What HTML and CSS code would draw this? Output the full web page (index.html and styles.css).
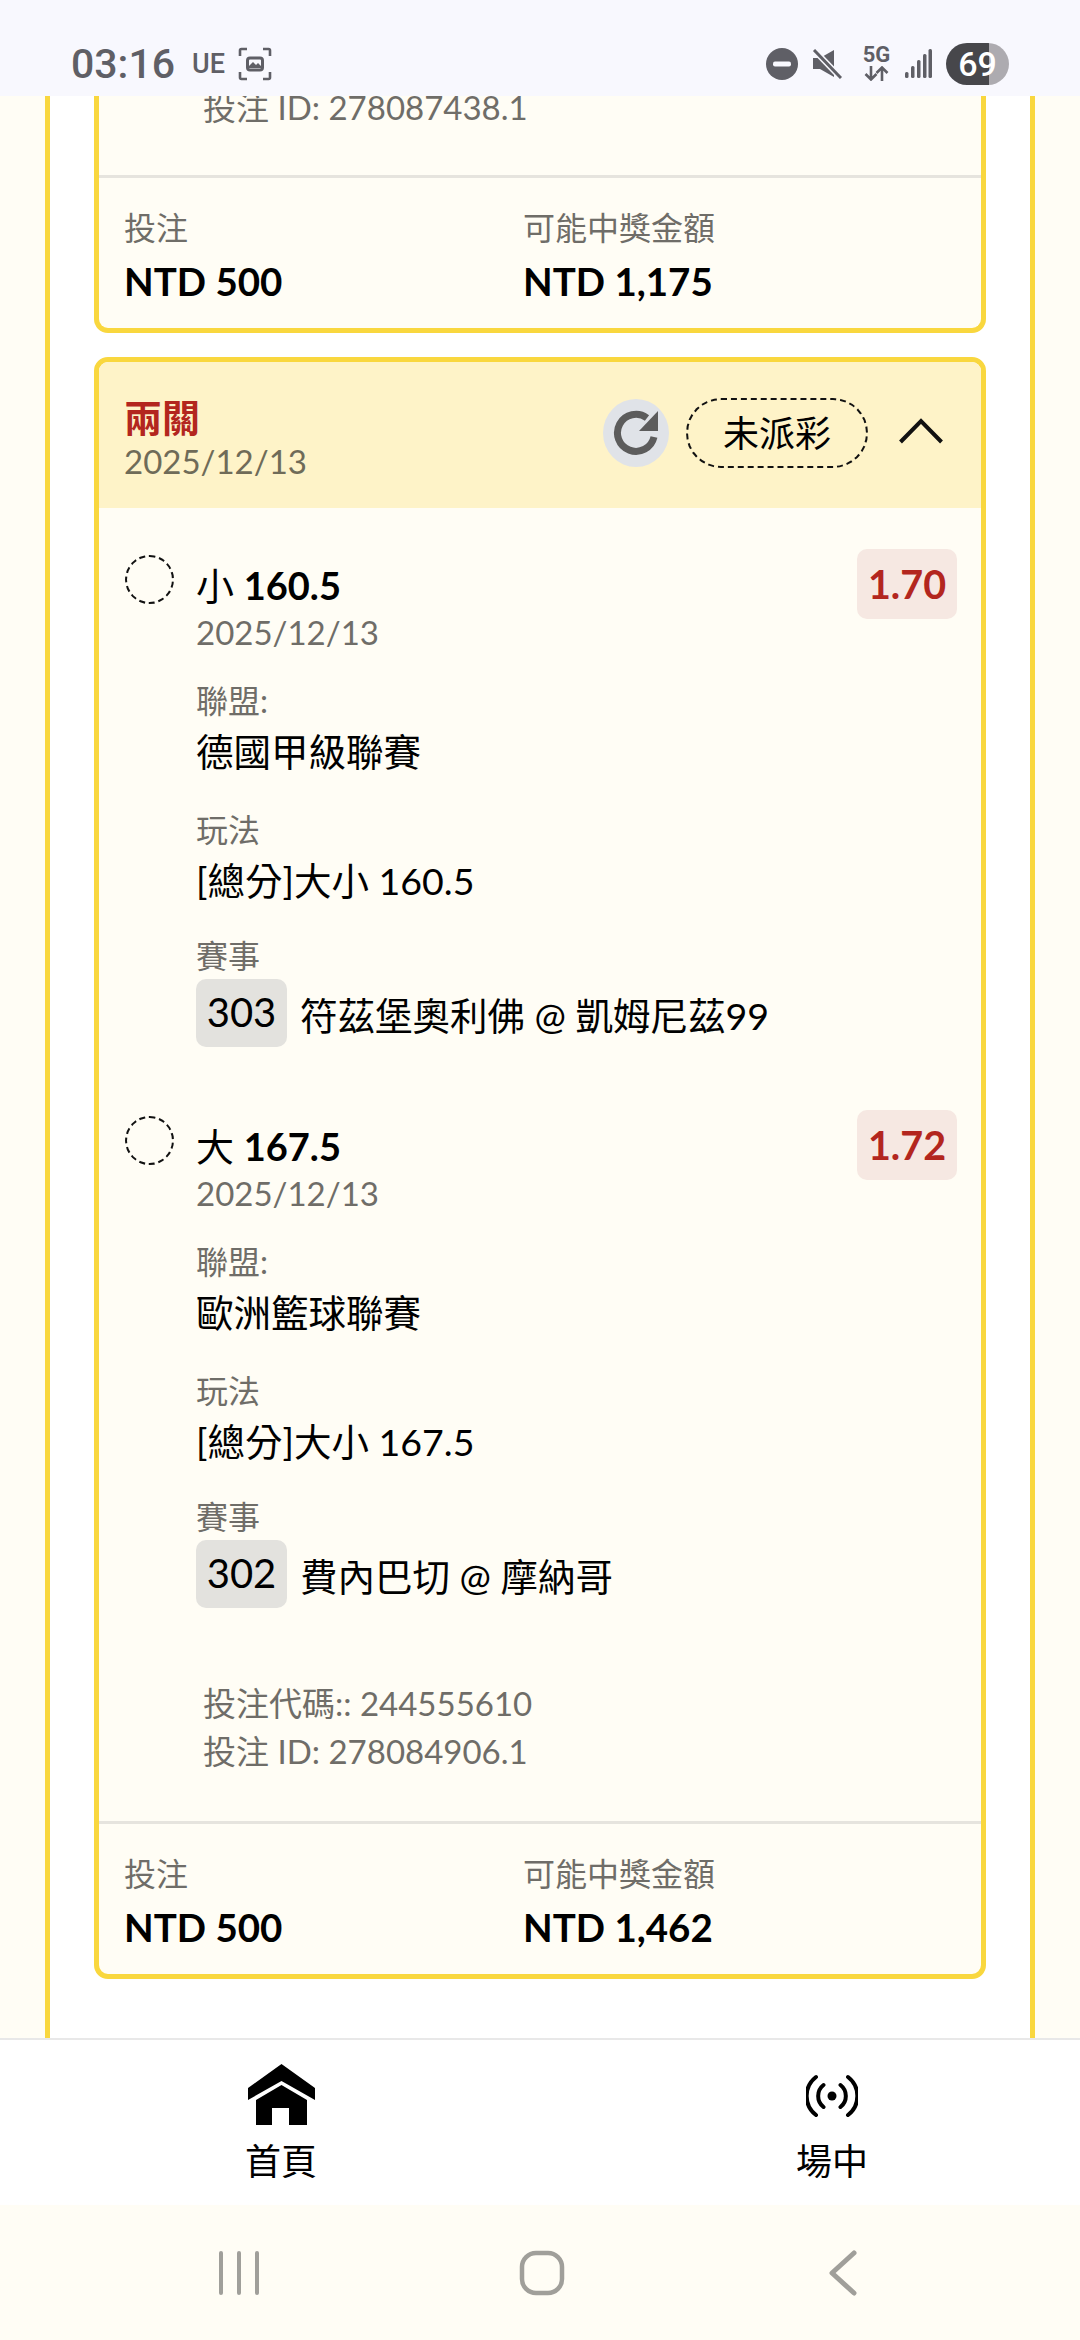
FILE: index.html
```html
<!DOCTYPE html>
<html lang="zh-Hant">
<head>
    <meta charset="UTF-8">
    <title>投注記錄</title>
    <link rel="stylesheet" href="styles.css">
</head>
<body>
    <header class="status-bar">
        <div class="status-left">
            <span class="clock">03:16</span>
            <span class="carrier">UE</span>
            <svg class="status-icon" width="34" height="34" viewBox="0 0 34 34" fill="none" stroke="#5f5f66" stroke-width="2.6">
                <path d="M9 2H3.5Q2 2 2 3.5V9M25 2h5.5Q32 2 32 3.500V9M2 25v5.500Q2 32 3.500 32H9M32 25v5.500Q32 32 30.500 32H25"/>
                <rect x="9.500" y="11" width="15" height="12" rx="2.500" stroke-width="3"/>
                <path d="M11 19l4-4 3 3 2-2 3 3v2H11z" fill="#5f5f66" stroke="none"/>
            </svg>
        </div>
        <div class="status-right">
            <svg width="32" height="32" viewBox="0 0 32 32"><circle cx="16" cy="16" r="16" fill="#5f5f66"/><rect x="7" y="13.500" width="18" height="5" rx="2" fill="#f8f8fe"/></svg>
            <svg width="30" height="30" viewBox="0 0 30 30"><path d="M1 9h7l14-8v27L8 20H1z" fill="#5f5f66"/><path d="M2 1l27 28" stroke="#f8f8fe" stroke-width="6"/><path d="M2 1l27 28" stroke="#5f5f66" stroke-width="3"/></svg>
            <span class="net"><b>5G</b>
                <svg width="25" height="15" viewBox="0 0 25 15" fill="none" stroke="#5f5f66" stroke-width="2.600"><path d="M7 0v13M1.500 8l5.500 5.500L12.500 8M18 15V2M12.500 7L18 1.500 23.500 7"/></svg>
            </span>
            <svg width="27" height="30" viewBox="0 0 27 30" fill="#5f5f66"><rect x="0" y="23" width="3.500" height="6" rx="1.500"/><rect x="6" y="17" width="3.500" height="12" rx="1.500"/><rect x="12" y="11" width="3.500" height="18" rx="1.500"/><rect x="18" y="5" width="3.500" height="24" rx="1.500"/><rect x="23.500" y="0" width="3.500" height="29" rx="1.500"/></svg>
            <span class="battery">69</span>
        </div>
    </header>

    <main class="page">
        <div class="panel">
            <section class="card card-cut">
                <div class="codes">
                    <p>投注 ID: 278087438.1</p>
                </div>
                <div class="card-foot">
                    <div class="foot-col"><span>投注</span><strong>NTD 500</strong></div>
                    <div class="foot-col"><span>可能中獎金額</span><strong>NTD 1,175</strong></div>
                </div>
            </section>

            <section class="card">
                <div class="card-head">
                    <div class="head-title">
                        <h2>兩關</h2>
                        <p>2025/12/13</p>
                    </div>
                    <span class="refresh">
                        <svg width="46" height="46" viewBox="0 0 46 46">
                            <path d="M34 8A18.500 18.500 0 1 0 41 27" fill="none" stroke="#5c5c5c" stroke-width="7"/>
                            <path d="M45 1v20H26z" fill="#5c5c5c"/>
                        </svg>
                    </span>
                    <span class="state">未派彩</span>
                    <svg class="chevron" width="44" height="26" viewBox="0 0 44 26" fill="none" stroke="#111" stroke-width="4"><path d="M1.500 24L22 3l20.500 21"/></svg>
                </div>

                <div class="card-body">
                    <article class="leg">
                        <span class="leg-mark"></span>
                        <div class="leg-main">
                            <div class="leg-title">小 <b>160.5</b></div>
                            <div class="leg-date">2025/12/13</div>
                            <div class="field field-first">
                                <div class="field-label">聯盟:</div>
                                <div class="field-value">德國甲級聯賽</div>
                            </div>
                            <div class="field">
                                <div class="field-label">玩法</div>
                                <div class="field-value">[總分]大小 160.5</div>
                            </div>
                            <div class="field field-game">
                                <div class="field-label">賽事</div>
                                <div class="game"><span class="game-no">303</span>符茲堡奧利佛 @ 凱姆尼茲99</div>
                            </div>
                        </div>
                        <span class="odds">1.70</span>
                    </article>

                    <article class="leg">
                        <span class="leg-mark"></span>
                        <div class="leg-main">
                            <div class="leg-title">大 <b>167.5</b></div>
                            <div class="leg-date">2025/12/13</div>
                            <div class="field field-first">
                                <div class="field-label">聯盟:</div>
                                <div class="field-value">歐洲籃球聯賽</div>
                            </div>
                            <div class="field">
                                <div class="field-label">玩法</div>
                                <div class="field-value">[總分]大小 167.5</div>
                            </div>
                            <div class="field field-game">
                                <div class="field-label">賽事</div>
                                <div class="game"><span class="game-no">302</span>費內巴切 @ 摩納哥</div>
                            </div>
                        </div>
                        <span class="odds">1.72</span>
                    </article>

                    <div class="codes">
                        <p>投注代碼:: 244555610</p>
                        <p>投注 ID: 278084906.1</p>
                    </div>
                </div>

                <div class="card-foot">
                    <div class="foot-col"><span>投注</span><strong>NTD 500</strong></div>
                    <div class="foot-col"><span>可能中獎金額</span><strong>NTD 1,462</strong></div>
                </div>
            </section>
        </div>
    </main>

    <nav class="tabs">
        <div class="tab">
            <svg width="67" height="61" viewBox="0 0 67 61">
                <path d="M33.500 0L67 24v12L33.500 17 0 36V24z" fill="#000"/>
                <path d="M33.500 21L59 36v25H41V44H24v17H8V36z" fill="#000"/>
            </svg>
            <span>首頁</span>
        </div>
        <div class="tab">
            <svg width="52" height="61" viewBox="0 -11 52 61" fill="none" stroke="#000" stroke-width="4" stroke-linecap="round">
                <circle cx="26" cy="21" r="4.500" fill="#000" stroke="none"/>
                <path d="M17.500 10a14 14 0 0 0 0 22M34.500 10a14 14 0 0 1 0 22M10 2a24 24 0 0 0 0 38M42 2a24 24 0 0 1 0 38"/>
            </svg>
            <span>場中</span>
        </div>
    </nav>

    <footer class="system-nav">
        <svg width="42" height="44" viewBox="0 0 42 44" stroke="#a09f9a" stroke-width="4" stroke-linecap="round"><path d="M3 2v40M21 2v40M39 2v40"/></svg>
        <svg width="46" height="46" viewBox="0 0 46 46" fill="none" stroke="#a09f9a" stroke-width="4.500"><rect x="3" y="3" width="40" height="40" rx="14"/></svg>
        <svg class="nav-back" width="28" height="46" viewBox="0 0 28 46" fill="none" stroke="#a09f9a" stroke-width="5" stroke-linecap="round" stroke-linejoin="round"><path d="M25 3L3 23l22 20"/></svg>
    </footer>
</body>
</html>
```

FILE: styles.css
```css
* {
    box-sizing: border-box;
}

html, body {
    margin: 0;
    padding: 0;
}

body {
    display: flex;
    flex-direction: column;
    width: 1080px;
    height: 2340px;
    overflow: hidden;
    background-color: #fffdf5;
    color: #000;
    font-family: "Lato", "Noto Sans CJK TC", sans-serif;
}

p, h2 {
    margin: 0;
}

/* status bar */
.status-bar {
    display: flex;
    justify-content: space-between;
    align-items: center;
    flex: none;
    height: 96px;
    padding: 31px 71px 0;
    background-color: #f8f8fe;
    color: #5f5f66;
    font-family: "Roboto", sans-serif;
}

.status-left {
    display: flex;
    align-items: center;
}

.clock {
    font-size: 41px;
    font-weight: 500;
}

.carrier {
    margin-left: 17px;
    font-size: 27px;
    font-weight: 500;
}

.status-icon {
    margin-left: 13px;
}

.status-right {
    display: flex;
    align-items: center;
    gap: 14px;
}

.net {
    display: flex;
    flex-direction: column;
    align-items: center;
    gap: 2px;
    width: 25px;
    margin-left: 8px;
    margin-right: 2px;
    font-size: 22px;
    line-height: 18px;
}

.battery {
    width: 63px;
    height: 42px;
    border-radius: 21px;
    background: linear-gradient(90deg, #47474b 68%, #adabb0 68%);
    color: #fff;
    font-size: 34px;
    font-weight: 500;
    line-height: 42px;
    text-align: center;
}

/* scrolled content */
.page {
    display: flex;
    flex: none;
    flex-direction: column;
    justify-content: flex-end;
    height: 1942px;
    padding: 0 45px;
    overflow: hidden;
}

.panel {
    padding: 0 44px 59px;
    background-color: #fff;
    border-left: 5px solid #f9d73e;
    border-right: 5px solid #f9d73e;
}

.card {
    margin-top: 24px;
    overflow: hidden;
    background-color: #fffdf5;
    border: 5px solid #f9d73e;
    border-radius: 14px;
}

.card-cut {
    margin-top: 0;
    border-top: none;
    border-radius: 0 0 14px 14px;
}

.card-head {
    display: flex;
    align-items: center;
    height: 146px;
    padding: 0 38px 5px 25px;
    background-color: #fef3c8;
}

.head-title {
    flex: 1;
    padding-top: 11px;
}

.head-title h2 {
    color: #b3261e;
    font-size: 38px;
    font-weight: 700;
    line-height: 46px;
}

.head-title p {
    color: #6f6b58;
    font-size: 33px;
    line-height: 42px;
}

.refresh {
    display: flex;
    justify-content: center;
    align-items: center;
    width: 66px;
    height: 68px;
    margin-right: 17px;
    border-radius: 50%;
    background-color: #e0e3e8;
}

.state {
    width: 182px;
    height: 70px;
    margin-right: 31px;
    border: 2px dashed #111;
    border-radius: 35px;
    font-size: 36px;
    line-height: 66px;
    text-align: center;
}

.chevron {
    margin-bottom: 3px;
}

.card-body {
    padding: 41px 24px 0 26px;
}

.leg {
    display: flex;
    align-items: flex-start;
    margin-bottom: 63px;
}

.leg-mark {
    flex: none;
    width: 49px;
    height: 49px;
    margin-top: 6px;
    margin-right: 22px;
    border: 2px dashed #111;
    border-radius: 50%;
}

.leg-main {
    flex: 1;
    padding-top: 12px;
}

.leg-title {
    font-size: 38px;
    line-height: 48px;
}

.leg-date {
    color: #6f6d68;
    font-size: 33px;
    line-height: 46px;
}

.field {
    margin-top: 30px;
}

.field-first {
    margin-top: 24px;
}

.field-game {
    margin-top: 27px;
}

.field-label {
    color: #6f6d68;
    font-size: 32px;
    line-height: 44px;
}

.field-value {
    margin-top: 3px;
    font-size: 37.500px;
    line-height: 52px;
}

.game {
    display: flex;
    align-items: center;
    margin-top: 1px;
    font-size: 37.500px;
}

.game-no {
    width: 91px;
    height: 68px;
    margin-right: 13px;
    border-radius: 10px;
    background-color: #e3e2de;
    font-size: 40px;
    line-height: 66px;
    text-align: center;
}

.odds {
    flex: none;
    width: 100px;
    height: 70px;
    border-radius: 10px;
    background-color: #f6e8e2;
    color: #b3261e;
    font-size: 39.500px;
    font-weight: 700;
    line-height: 70px;
    text-align: center;
}

.codes {
    padding-bottom: 46px;
    padding-left: 78px;
    color: #6f6d68;
    font-size: 33px;
    line-height: 48px;
}

.leg + .codes {
    margin-top: 71px;
}

.card-cut .codes {
    padding-bottom: 44px;
    padding-left: 104px;
}

.card-foot {
    display: flex;
    height: 153px;
    padding: 27px 25px 0;
    border-top: 3px solid #e6e4de;
}

.foot-col {
    display: flex;
    flex-direction: column;
    width: 399px;
}

.foot-col span {
    color: #6f6d68;
    font-size: 32px;
    line-height: 46px;
}

.foot-col strong {
    margin-top: 6px;
    font-size: 38.500px;
    font-weight: 700;
    line-height: 48px;
}

/* bottom tabs */
.tabs {
    display: flex;
    flex: none;
    justify-content: space-between;
    height: 167px;
    padding: 24px 198px 0 231px;
    background-color: #fff;
    border-top: 2px solid #e8e8e8;
}

.tab {
    display: flex;
    flex-direction: column;
    align-items: center;
    width: 100px;
    height: 130px;
}

.tab svg {
    flex: none;
}

.tab span {
    margin-top: 13px;
    font-size: 36px;
    line-height: 46px;
}

/* android navigation */
.system-nav {
    display: flex;
    flex: 1;
    align-items: center;
    gap: 259px;
    padding-left: 218px;
}

.nav-back {
    margin-left: 5px;
}
```
